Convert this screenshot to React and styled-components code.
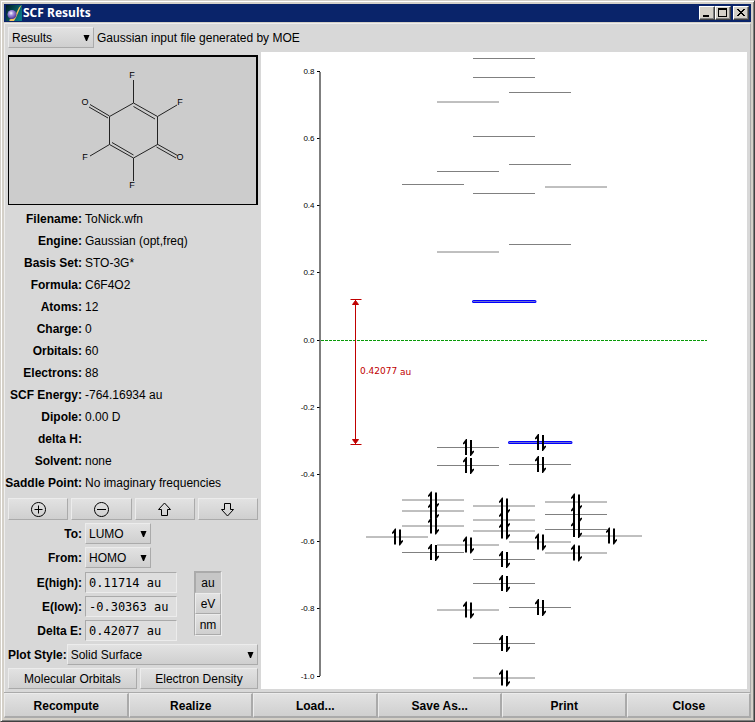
import React, { useState } from "react";
import styled, { createGlobalStyle, css } from "styled-components";

const GlobalStyle = createGlobalStyle`
  *, *::before, *::after { box-sizing: border-box; }
  body { margin: 0; background: #d4d0c8; }
  button, input, select { font: inherit; color: inherit; margin: 0; border-radius: 0; }
`;

const sans = `"Liberation Sans", Arial, sans-serif`;

const raised = css`
  border: 1px solid;
  border-color: #ececec #aaa #aaa #ececec;
  background: linear-gradient(#e2e2e2, #cfcfcf);
`;

const Window = styled.div`
  display: flex;
  flex-direction: column;
  min-height: 100vh;
  padding: 3px;
  border: 1px solid;
  border-color: #d4d0c8 #404040 #404040 #d4d0c8;
  box-shadow: inset 1px 1px 0 #fff, inset -1px -1px 0 #808080;
  background: #d4d0c8;
  font: 12px/14px ${sans};
  color: #000;
`;

const TitleBar = styled.header`
  display: flex;
  align-items: center;
  height: 18px;
  margin-bottom: 1px;
  padding: 0 2px;
  background: #0a246a;
  color: #fff;
`;

const Title = styled.h1`
  flex: 1;
  margin: 0 0 0 1px;
  font: bold 12px/16px "Noto Sans", sans-serif;
`;

const WindowButton = styled.button`
  display: grid;
  place-items: center;
  width: 16px;
  height: 14px;
  padding: 0;
  margin-left: ${(p) => (p.$spaced ? 2 : 0)}px;
  border: 1px solid;
  border-color: #fff #404040 #404040 #fff;
  box-shadow: inset -1px -1px 0 #808080;
  background: #d4d0c8;
`;

const Client = styled.div`
  flex: 1;
  display: flex;
  flex-direction: column;
  border: 1px solid;
  border-color: #eee #aaa #d4d0c8 #eee;
  border-bottom: 0;
  background: #d8d8d8;
`;

const Toolbar = styled.div`
  display: flex;
  align-items: center;
  gap: 3px;
  padding: 3px 3px 4px;
`;

const Main = styled.main`
  flex: 1;
  display: flex;
  gap: 3px;
  padding: 0 3px 3px;
`;

const Sidebar = styled.section`
  flex: 0 0 250px;
  display: flex;
  flex-direction: column;
  gap: 3px;
  padding-top: 3px;
`;

const MoleculeView = styled.div`
  height: 150px;
  border: solid #000;
  border-width: 2px 2px 1px 1px;
  background: #ccc;
  svg { display: block; width: 100%; height: 100%; }
`;

const Facts = styled.dl`
  display: grid;
  grid-template-columns: 74px 1fr;
  grid-auto-rows: 22px;
  align-items: center;
  column-gap: 3px;
  margin: 0 0 1px;
  white-space: nowrap;
`;

const FactName = styled.dt`
  justify-self: end;
  font-weight: bold;
`;

const FactValue = styled.dd`
  margin: 0;
`;

const ToolRow = styled.div`
  display: grid;
  grid-template-columns: repeat(4, 1fr);
  gap: 3px;
`;

const Button = styled.button`
  ${raised}
  display: grid;
  place-items: center;
  flex: ${(p) => p.$grow || "0 0 auto"};
  height: ${(p) => p.$height || 21}px;
  padding: 0;
`;

const FieldGrid = styled.div`
  display: grid;
  grid-template-columns: 74px 92px;
  gap: 3px;
  align-items: center;
`;

const Label = styled.label`
  justify-self: end;
  font-weight: bold;
  white-space: nowrap;
`;

const SelectBox = styled.span`
  display: grid;
  align-items: center;
  width: ${(p) => (p.$width ? `${p.$width}px` : "auto")};
  flex: ${(p) => (p.$width ? "none" : 1)};
  > * { grid-area: 1 / 1; }
  svg { justify-self: end; margin-right: 4px; pointer-events: none; }
`;

const Select = styled.select`
  ${raised}
  appearance: none;
  width: 100%;
  height: 21px;
  padding: 0 16px 0 3px;
  outline: none;
`;

const Readout = styled.input`
  width: 92px;
  height: 21px;
  padding: 0 3px;
  border: 1px solid;
  border-color: #aaa #ececec #ececec #aaa;
  background: #dedede;
  font-family: "DejaVu Sans Mono", monospace;
  outline: none;
`;

const EnergyPanel = styled.div`
  display: flex;
  gap: 17px;
  margin-top: 1px;
`;

const Units = styled.div`
  display: flex;
  flex-direction: column;
  align-self: flex-start;
  width: 28px;
  margin-top: -1px;
  border: 1px solid;
  border-color: #aaa #ececec #ececec #aaa;
`;

const UnitButton = styled.button`
  ${raised}
  height: 21px;
  padding: 0;
  ${(p) =>
    p.$on &&
    css`
      background: #c6c6c6;
      border-color: #aaa #c6c6c6 #c6c6c6 #aaa;
    `}
`;

const Line = styled.div`
  display: flex;
  align-items: center;
  gap: ${(p) => (p.$tight ? 0 : 3)}px;
`;

const ChartPanel = styled.section`
  flex: 1;
  min-width: 0;
  background: #fff;
  svg { display: block; width: 100%; height: auto; }
`;

const Footer = styled.footer`
  display: grid;
  grid-template-columns: repeat(6, 1fr);
  margin: 0 -1px;
  border-top: 1px solid #aaa;
`;

const Action = styled.button`
  ${raised}
  height: 25px;
  padding: 1px 0 0 1px;
  border-width: 1px 2px 2px 1px;
  font-weight: bold;
`;

const AxisText = styled.text`
  font: 8px ${sans};
  text-anchor: end;
`;

const GapText = styled.text`
  font: 9px "DejaVu Sans", sans-serif;
  fill: #c00000;
`;

const AtomText = styled.text`
  font: 9px ${sans};
  text-anchor: middle;
`;

function AppIcon() {
  return (
    <svg width="16" height="16" viewBox="0 0 16 16" aria-hidden="true">
      <defs>
        <linearGradient id="tile" x1="0" y1="0" x2="1" y2="0.6">
          <stop offset="0" stopColor="#001c20" />
          <stop offset="1" stopColor="#087884" />
        </linearGradient>
        <radialGradient id="ball" cx="0.4" cy="0.35" r="0.6">
          <stop offset="0" stopColor="#fff" />
          <stop offset="0.4" stopColor="#a594e0" />
          <stop offset="1" stopColor="#5a3ca0" />
        </radialGradient>
      </defs>
      <rect width="16" height="16" fill="url(#tile)" />
      <path d="M15.5 0 10 12.5 8 16H3.5V14.5L8 13 13 2.5z" fill="#f3c45c" />
      <circle cx="6" cy="9.5" r="4.5" fill="url(#ball)" />
    </svg>
  );
}

const Caret = () => (
  <svg width="7" height="8" viewBox="0 0 7 8" aria-hidden="true">
    <path d="M0.5 1h6L4 7H3z" />
  </svg>
);

const ToolIcon = ({ d }) => (
  <svg width="17" height="17" viewBox="0 0 17 17" fill="none" stroke="#000" aria-hidden="true">
    <path d={d} />
  </svg>
);

const ring = "M8.5 1.5a7 7 0 1 0 .01 0z";
const TOOLS = [
  ["Add", `${ring}M4.5 8.5h8M8.5 4.5v8`],
  ["Remove", `${ring}M4 8.5h9`],
  ["Move up", "M8.5 2 14.5 8.5H11.5V14.5H5.5V8.5H2.5z"],
  ["Move down", "M8.5 15 14.5 8.5H11.5V2.5H5.5V8.5H2.5z"],
];

const FACTS = [
  ["Filename", "ToNick.wfn"],
  ["Engine", "Gaussian (opt,freq)"],
  ["Basis Set", "STO-3G*"],
  ["Formula", "C6F4O2"],
  ["Atoms", "12"],
  ["Charge", "0"],
  ["Orbitals", "60"],
  ["Electrons", "88"],
  ["SCF Energy", "-764.16934 au"],
  ["Dipole", "0.00 D"],
  ["delta H", ""],
  ["Solvent", "none"],
  ["Saddle Point", "No imaginary frequencies"],
];

const READOUTS = [
  ["E(high)", "0.11714 au"],
  ["E(low)", "-0.30363 au"],
  ["Delta E", "0.42077 au"],
];

const ACTIONS = ["Recompute", "Realize", "Load...", "Save As...", "Print", "Close"];

const ATOMS = [
  ["F", 132, 78],
  ["F", 180, 105],
  ["O", 85, 105],
  ["F", 85, 160],
  ["O", 180, 160],
  ["F", 132, 188],
];

function Molecule() {
  return (
    <svg viewBox="9 57 247 147" role="img" aria-label="Tetrafluorobenzoquinone structure">
      <g fill="none" stroke="#222">
        <path d="M133.5 103 157.5 116.5V144.5L133.5 158 109.5 144.5V116.5z" />
        <path d="M133.5 103V80M157.5 116.5 177 105M109.5 144.5 90 156M133.5 158V181" />
        <path d="M109.5 116 90 104.5M108 118 89 107M157 144 177.5 155.5M156.5 147 176 158" />
        <path d="M133.5 106.5 155 119M133.5 155 112 142.5" />
      </g>
      {ATOMS.map(([name, x, y]) => (
        <AtomText key={`${x}-${y}`} x={x} y={y}>{name}</AtomText>
      ))}
    </svg>
  );
}

/* Each column: left edge, empty levels, doubly occupied levels. */
const COLUMNS = [
  [366, [], [537]],
  [402, [184.5], [500, 511, 526, 552.5]],
  [437, [102, 171.5, 252], [447.5, 465.5, 545, 610]],
  [473, [58.5, 77.5, 136.5, 193.5], [506, 520, 531, 559.5, 583.5, 643.5, 678]],
  [509, [92.5, 164.5, 244.5], [464.5, 542, 607.5]],
  [545, [187], [502, 514.5, 529.5, 553]],
  [580, [], [536]],
];
const TICKS = [0.8, 0.6, 0.4, 0.2, 0, -0.2, -0.4, -0.6, -0.8, -1];
const AXIS_ZERO = 340.5;
const AXIS_SCALE = 336;

const ElectronPair = ({ x, y }) => (
  <path
    transform={`translate(${x} ${y})`}
    d="M-3.5 7.5V-4L-5.5 -3V-4.5L-2.5 -8.5H-1.5V7.5zM1.5 -7.5H3.5V4L5.5 3V4.5L2.5 8.5H1.5z"
  />
);

function OrbitalChart() {
  return (
    <svg viewBox="261 52 486 637" role="img" aria-label="Orbital energy levels">
      {TICKS.map((v) => {
        const y = Math.round(AXIS_ZERO - v * AXIS_SCALE) - 0.5;
        return (
          <g key={v}>
            <path d={`M317 ${y}h3`} stroke="#000" />
            <AxisText x="314.5" y={y + 2.5}>{v.toFixed(1)}</AxisText>
          </g>
        );
      })}
      <path d="M320 72V676" stroke="#555" strokeWidth="1.5" />
      <path d="M321 340.5H707" stroke="#0a9a0a" strokeDasharray="3 1" />

      <g stroke="#808080">
        {COLUMNS.map(([x, empty, filled]) =>
          [...empty, ...filled].map((y) => <path key={`${x}-${y}`} d={`M${x} ${y}h62`} />)
        )}
      </g>
      <g strokeLinecap="round">
        <path d="M473.5 301.5h61.5M509.5 442.5h61.5" stroke="#0000ff" strokeWidth="3" />
        <path d="M473.5 301.5h61.5M509.5 442.5h61.5" stroke="#7070d0" />
      </g>
      {COLUMNS.map(([x, , filled]) =>
        filled.map((y) => <ElectronPair key={`${x}-${y}`} x={x + 31.5} y={y} />)
      )}
      <ElectronPair x={540.5} y={442.5} />

      <g stroke="#c00000" fill="#c00000">
        <path d="M355.5 300V444M350.5 299.5h11M350.5 444.5h11" />
        <path d="M355.5 300.5 358.5 304.5H352.5zM355.5 443.5 358.5 439.5H352.5z" />
      </g>
      <GapText x="360" y="374">0.42077</GapText>
      <GapText x="400" y="375">au</GapText>
    </svg>
  );
}

function Dropdown({ id, label, width, options }) {
  return (
    <SelectBox $width={width}>
      <Select id={id} aria-label={label}>
        {options.map((o) => <option key={o}>{o}</option>)}
      </Select>
      <Caret />
    </SelectBox>
  );
}

export default function App() {
  const [unit, setUnit] = useState("au");
  return (
    <Window>
      <GlobalStyle />
      <TitleBar>
        <AppIcon />
        <Title>SCF Results</Title>
        <WindowButton aria-label="Minimize">
          <svg width="14" height="12"><path d="M3 8h6v2H3z" /></svg>
        </WindowButton>
        <WindowButton aria-label="Maximize">
          <svg width="14" height="12"><path d="M2 1h9v9H2zM3 3v6h7V3z" fillRule="evenodd" /></svg>
        </WindowButton>
        <WindowButton aria-label="Close window" $spaced>
          <svg width="14" height="12">
            <path d="M3 2h2v1h1v1h2V3h1V2h2v1h-1v1H9v1H8v1h1v1h1v1h1v1H9V8H8V7H6v1H5v1H3V8h1V7h1V6h1V5H5V4H4V3H3z" />
          </svg>
        </WindowButton>
      </TitleBar>
      <Client>
        <Toolbar>
          <Dropdown label="Results" width={86} options={["Results"]} />
          <span>Gaussian input file generated by MOE</span>
        </Toolbar>
        <Main>
          <Sidebar>
            <MoleculeView><Molecule /></MoleculeView>
            <Facts>
              {FACTS.map(([name, value]) => (
                <React.Fragment key={name}>
                  <FactName>{name}:</FactName>
                  <FactValue>{value}</FactValue>
                </React.Fragment>
              ))}
            </Facts>
            <ToolRow>
              {TOOLS.map(([name, d]) => (
                <Button key={name} aria-label={name} $height={22}><ToolIcon d={d} /></Button>
              ))}
            </ToolRow>
            <FieldGrid>
              <Label htmlFor="to">To:</Label>
              <Dropdown id="to" width={66} options={["LUMO", "HOMO"]} />
              <Label htmlFor="from">From:</Label>
              <Dropdown id="from" width={66} options={["HOMO", "LUMO"]} />
            </FieldGrid>
            <EnergyPanel>
              <FieldGrid>
                {READOUTS.map(([name, value]) => (
                  <React.Fragment key={name}>
                    <Label htmlFor={name}>{name}:</Label>
                    <Readout id={name} value={value} readOnly />
                  </React.Fragment>
                ))}
              </FieldGrid>
              <Units role="group" aria-label="Energy unit">
                {["au", "eV", "nm"].map((u) => (
                  <UnitButton key={u} $on={u === unit} aria-pressed={u === unit} onClick={() => setUnit(u)}>
                    {u}
                  </UnitButton>
                ))}
              </Units>
            </EnergyPanel>
            <Line $tight>
              <Label htmlFor="style">Plot Style:</Label>
              <Dropdown id="style" options={["Solid Surface"]} />
            </Line>
            <Line>
              <Button $grow="129 1 0">Molecular Orbitals</Button>
              <Button $grow="118 1 0">Electron Density</Button>
            </Line>
          </Sidebar>
          <ChartPanel><OrbitalChart /></ChartPanel>
        </Main>
        <Footer>
          {ACTIONS.map((a) => <Action key={a}>{a}</Action>)}
        </Footer>
      </Client>
    </Window>
  );
}
